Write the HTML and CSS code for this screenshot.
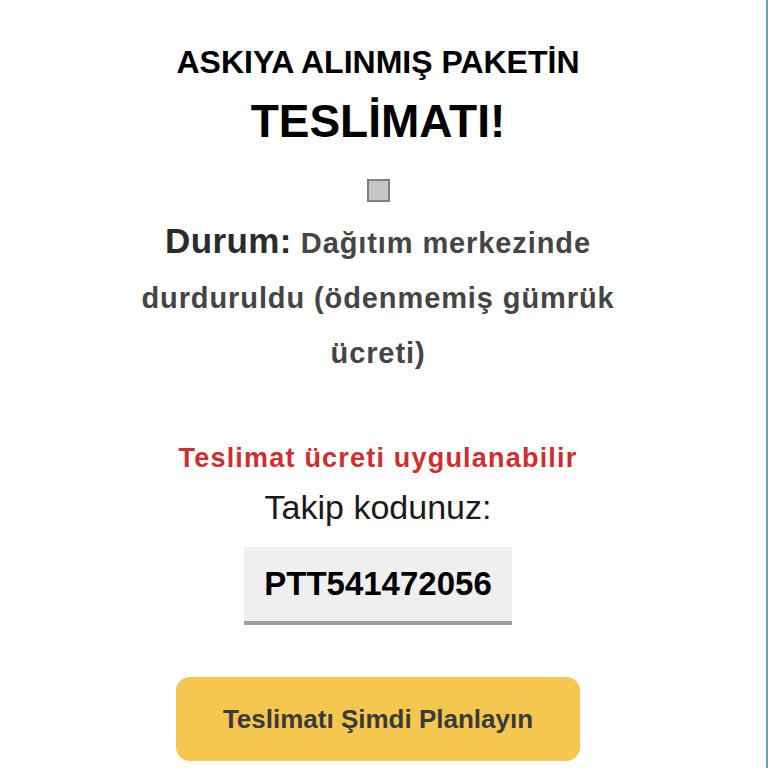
FILE: index.html
```html
<!DOCTYPE html>
<html lang="tr">
<head>
<meta charset="utf-8">
<title>Teslimat</title>
<link rel="stylesheet" href="styles.css">
</head>
<body>
<div class="page">
  <main class="content">
    <h1 class="title">
      <span class="title-top">ASKIYA ALINMIŞ PAKETİN</span>
      <span class="title-main">TESLİMATI!</span>
    </h1>
    <div class="checkbox"></div>
    <p class="status"><strong class="status-label">Durum:</strong> Dağıtım merkezinde durduruldu (ödenmemiş gümrük ücreti)</p>
    <p class="fee">Teslimat ücreti uygulanabilir</p>
    <p class="track-label">Takip kodunuz:</p>
    <div class="code">PTT541472056</div>
    <a class="btn" href="#">Teslimatı Şimdi Planlayın</a>
  </main>
</div>
</body>
</html>
```

FILE: styles.css
```css
html, body {
  margin: 0;
  padding: 0;
  background: #ffffff;
}

body {
  font-family: "Liberation Sans", Arial, Helvetica, sans-serif;
}

.page {
  width: 768px;
  min-height: 768px;
  box-sizing: border-box;
  border-right: 2px solid #5ea8bf;
  padding-right: 10px;
  padding-top: 44px;
}

.content {
  display: flex;
  flex-direction: column;
  align-items: center;
  text-align: center;
}

.title {
  margin: 0;
  font-weight: 700;
  color: #000;
}

.title-top {
  display: block;
  font-size: 32px;
  line-height: 36px;
}

.title-main {
  display: block;
  margin-top: 13px;
  font-size: 46px;
  line-height: 56px;
}

.checkbox {
  margin-top: 30px;
  width: 19px;
  height: 19px;
  background: #c6c6c6;
  border: 2px solid #7f7f7f;
}

.status {
  margin: 14px 0 0;
  max-width: 520px;
  font-size: 29px;
  line-height: 55px;
  font-weight: 700;
  color: #454545;
  letter-spacing: 0.9px;
}

.status-label {
  font-size: 35px;
  line-height: 40px;
  color: #2b2b2b;
  letter-spacing: 0.4px;
}

.fee {
  margin: 61px 0 0;
  font-size: 27px;
  line-height: 32px;
  font-weight: 700;
  color: #cf2e2e;
  letter-spacing: 1.2px;
}

.track-label {
  margin: 14px 0 0;
  font-size: 34px;
  line-height: 38px;
  color: #1a1a1a;
}

.code {
  margin-top: 21px;
  padding: 17px 20px;
  font-size: 33px;
  line-height: 40px;
  font-weight: 700;
  color: #000;
  background: #efefef;
  border-bottom: 4px solid #9e9e9e;
}

.btn {
  margin-top: 52px;
  width: 404px;
  box-sizing: border-box;
  padding: 27px 0;
  font-size: 26px;
  line-height: 30px;
  font-weight: 700;
  color: #3a3a3a;
  text-decoration: none;
  background: #f5c74f;
  border-radius: 14px;
}
```
